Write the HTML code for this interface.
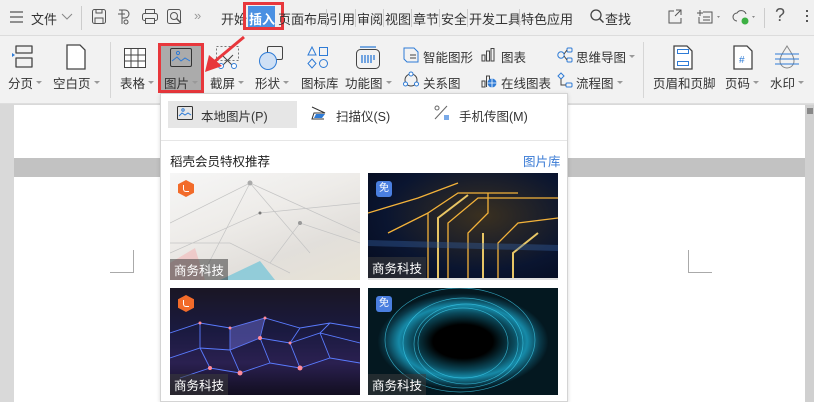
<!DOCTYPE html>
<html><head><meta charset="utf-8"><style>
*{margin:0;padding:0;box-sizing:border-box}
body{width:814px;height:402px;overflow:hidden;background:#d9d9d9;font-family:"Liberation Sans","Noto Sans CJK SC",sans-serif;font-size:12px;color:#333;position:relative}
.a{position:absolute;white-space:nowrap}
#top{position:absolute;left:0;top:0;width:814px;height:36px;background:#f0f0f0;border-bottom:1px solid #dcdcdc}
#rib{position:absolute;left:0;top:36px;width:814px;height:68px;background:#f2f2f2;border-bottom:1px solid #dedede}
.t{font-size:13px;top:9px;color:#333}
.l{font-size:12.5px;top:73px;color:#333}
.s{font-size:12.5px;color:#333}
.dd:after{content:"";display:inline-block;border:3px solid transparent;border-top:3px solid #999;margin-left:3px;vertical-align:1px}
svg{position:absolute;overflow:visible}
.img{position:absolute;overflow:hidden}
.cap{position:absolute;left:0;bottom:0;background:rgba(60,60,60,.55);color:#fff;font-size:12.5px;padding:1px 4px 1px 4px}
.badge{position:absolute;left:8px;top:8px;width:16px;height:16px;border-radius:3px;background:#4a7fe0;color:#fff;font-size:10px;text-align:center;line-height:16px}
.hex{position:absolute;left:8px;top:7px;width:16px;height:17px;background:#f26b2a;clip-path:polygon(50% 0,100% 25%,100% 75%,50% 100%,0 75%,0 25%)}
.hex:after{content:"";position:absolute;left:5px;top:5px;width:5px;height:6px;border-left:1.5px solid #fff;border-bottom:1.5px solid #fff;border-radius:0 0 0 3px}
</style></head><body>
<div id="top"></div>
<div id="rib"></div>
<!-- top row -->
<svg style="left:10px;top:11px" width="14" height="12"><path d="M0 1H13M0 6H13M0 11H13" stroke="#555" stroke-width="1.3"/></svg>
<div class="a t" style="left:31px">文件</div>
<svg style="left:62px;top:14px" width="10" height="6"><path d="M0 0L5 5L10 0" stroke="#888" fill="none"/></svg>
<div class="a" style="left:81px;top:6px;width:1px;height:24px;background:#ccc"></div>
<svg style="left:92px;top:9px" width="14" height="15"><rect x="0.5" y="0.5" width="13" height="14" rx="2" fill="none" stroke="#555"/><path d="M3 14V9H11V14M4 1V4H10V1" stroke="#555" fill="none"/></svg>
<svg style="left:117px;top:9px" width="14" height="16"><path d="M2 1H8A4 4 0 0 1 8 9H5M5 1V15M1 5H8" stroke="#555" fill="none"/><circle cx="9" cy="13" r="2" fill="none" stroke="#555"/></svg>
<svg style="left:142px;top:9px" width="16" height="15"><rect x="0.5" y="4.5" width="15" height="7" rx="2" fill="none" stroke="#555"/><rect x="3.5" y="0.5" width="9" height="4" fill="none" stroke="#555"/><rect x="3.5" y="9.5" width="9" height="5" fill="#f0f0f0" stroke="#555"/></svg>
<svg style="left:167px;top:9px" width="16" height="16"><rect x="0.5" y="0.5" width="13" height="14" rx="2" fill="none" stroke="#555"/><circle cx="7" cy="7" r="3.5" fill="none" stroke="#555"/><path d="M9.5 9.5L14 14" stroke="#555" stroke-width="1.5"/></svg>
<div class="a" style="left:194px;top:8px;color:#999;font-size:13px">»</div>
<div class="a t" style="left:221px">开始</div>
<div class="a" style="left:248px;top:6px;width:27px;height:22px;background:#4a90e2"></div>
<div class="a t" style="left:249px;color:#fff;font-weight:bold">插入</div>
<div class="a" style="left:243px;top:2px;width:41px;height:28px;border:3px solid #e8373c"></div>
<div class="a t" style="left:278px">页面布局</div>
<div class="a" style="left:326px;top:9px;width:1px;height:18px;background:#ccc"></div>
<div class="a t" style="left:329px">引用</div>
<div class="a" style="left:355px;top:9px;width:1px;height:18px;background:#ccc"></div>
<div class="a t" style="left:357px">审阅</div>
<div class="a" style="left:383px;top:9px;width:1px;height:18px;background:#ccc"></div>
<div class="a t" style="left:385px">视图</div>
<div class="a" style="left:411px;top:9px;width:1px;height:18px;background:#ccc"></div>
<div class="a t" style="left:413px">章节</div>
<div class="a" style="left:439px;top:9px;width:1px;height:18px;background:#ccc"></div>
<div class="a t" style="left:441px">安全</div>
<div class="a" style="left:467px;top:9px;width:1px;height:18px;background:#ccc"></div>
<div class="a t" style="left:469px">开发工具</div>
<div class="a" style="left:519px;top:9px;width:1px;height:18px;background:#ccc"></div>
<div class="a t" style="left:521px">特色应用</div>
<svg style="left:590px;top:9px" width="14" height="15"><circle cx="6" cy="6" r="5" fill="none" stroke="#444" stroke-width="1.3"/><path d="M9.5 9.5L13.5 13.5" stroke="#444" stroke-width="1.5"/></svg>
<div class="a t" style="left:605px">查找</div>
<svg style="left:668px;top:9px" width="15" height="15"><path d="M6 2H1V14H13V9M8 1H13V6M13 1L7 7" stroke="#555" fill="none"/></svg>
<svg style="left:697px;top:9px" width="26" height="15"><path d="M3 1V7M0 4H6M6 3H15V14H2V8M6 8H13M6 11H13" stroke="#555" fill="none"/><path d="M20 7L23 7L21.5 9Z" fill="#888"/></svg>
<svg style="left:732px;top:9px" width="26" height="16"><path d="M5 12A4 4 0 0 1 5 4A5 5 0 0 1 14 5" stroke="#555" fill="none"/><circle cx="13" cy="12" r="3.5" fill="#3cb043"/><path d="M20 7L23 7L21.5 9Z" fill="#888"/></svg>
<div class="a" style="left:764px;top:8px;width:1px;height:20px;background:#ccc"></div>
<div class="a" style="left:775px;top:5px;font-size:18px;color:#555">?</div>
<div class="a" style="left:806px;top:10px;width:2px;height:2px;background:#555;box-shadow:0 5px #555,0 10px #555"></div>
<!-- ribbon -->
<svg style="left:12px;top:45px" width="24" height="24"><path d="M4 1H20V8H4ZM4 13H20V22H4Z" fill="none" stroke="#444" stroke-width="1.3" stroke-linejoin="round"/><path d="M0 8L3 10L0 12Z" fill="#2e7bd6"/></svg>
<div class="a l dd" style="left:8px">分页</div>
<svg style="left:66px;top:44px" width="20" height="26"><path d="M1 1H14L19 6V25H1Z" fill="#fff" stroke="#444" stroke-width="1.3"/></svg>
<div class="a l dd" style="left:53px">空白页</div>
<div class="a" style="left:110px;top:42px;width:1px;height:56px;background:#d6d6d6"></div>
<svg style="left:124px;top:48px" width="22" height="20"><rect x="0.5" y="0.5" width="21" height="19" fill="#fff" stroke="#444"/><path d="M0 7H22M0 13H22M7 0V20M14 0V20" stroke="#444"/></svg>
<div class="a l dd" style="left:120px">表格</div>
<div class="a" style="left:158px;top:43px;width:46px;height:50px;background:#ababab;border:3px solid #e8373c"></div>
<svg style="left:170px;top:48px" width="22" height="19"><rect x="0.5" y="0.5" width="21" height="18" rx="1.5" fill="none" stroke="#333"/><circle cx="8" cy="5" r="1.6" fill="none" stroke="#2e7bd6"/><path d="M2 13L7 9L11 13L15 10L20 13" stroke="#2e7bd6" fill="none"/></svg>
<div class="a l dd" style="left:164px">图片</div>
<svg style="left:216px;top:46px" width="24" height="24"><rect x="0.5" y="0.5" width="22" height="14" fill="none" stroke="#777" stroke-dasharray="2 2"/><path d="M6 9L17 20M17 9L6 20" stroke="#444"/><circle cx="5" cy="20" r="2.5" fill="#fff" stroke="#2e7bd6"/><circle cx="18" cy="20" r="2.5" fill="#fff" stroke="#2e7bd6"/></svg>
<div class="a l dd" style="left:210px">截屏</div>
<svg style="left:258px;top:45px" width="26" height="26"><rect x="9.5" y="1.5" width="15" height="13" rx="1.5" fill="none" stroke="#444"/><circle cx="10" cy="16" r="8.5" fill="#cfe0f5" stroke="#2e7bd6"/></svg>
<div class="a l dd" style="left:255px">形状</div>
<svg style="left:307px;top:46px" width="22" height="24"><path d="M5 1L9 9H1Z" fill="none" stroke="#2e7bd6"/><rect x="12.5" y="1.5" width="8" height="8" fill="none" stroke="#2e7bd6"/><path d="M5 13L9 17.5L5 22L1 17.5Z" fill="none" stroke="#2e7bd6"/><circle cx="16.5" cy="17.5" r="4" fill="none" stroke="#2e7bd6"/></svg>
<div class="a l" style="left:301px">图标库</div>
<svg style="left:355px;top:46px" width="26" height="24"><rect x="1.5" y="3.5" width="23" height="19" rx="4" fill="none" stroke="#444"/><path d="M5 1H21M7 9V17M10 9V17M13 9V17M16 9V17M19 9V14" stroke="#2e7bd6" stroke-width="1.3"/></svg>
<div class="a l dd" style="left:345px">功能图</div>
<svg style="left:403px;top:47px" width="16" height="16"><path d="M1 1H11L15 5V15H4L1 12Z" fill="none" stroke="#2e7bd6"/><path d="M7 8H13M7 11H13" stroke="#444"/></svg>
<div class="a s" style="left:423px;top:47px">智能图形</div>
<svg style="left:403px;top:72px" width="16" height="16"><circle cx="8" cy="8" r="6" fill="none" stroke="#444"/><circle cx="8" cy="2" r="2" fill="#fff" stroke="#2e7bd6"/><circle cx="2.5" cy="12" r="2" fill="#fff" stroke="#2e7bd6"/><circle cx="13.5" cy="12" r="2" fill="#fff" stroke="#2e7bd6"/></svg>
<div class="a s" style="left:423px;top:73px">关系图</div>
<svg style="left:481px;top:48px" width="14" height="14"><path d="M1 13V7H4V13ZM5.5 13V3H8.5V13ZM10 13V0.5H13V13Z" fill="none" stroke="#444"/></svg>
<div class="a s" style="left:501px;top:47px">图表</div>
<svg style="left:481px;top:72px" width="16" height="16"><path d="M1 15V9H4V15ZM5.5 15V4H8.5V9" fill="none" stroke="#444"/><circle cx="11" cy="11" r="4.5" fill="#2e7bd6"/><path d="M6.5 11H15.5M11 6.5V15.5" stroke="#fff" stroke-width=".8"/></svg>
<div class="a s" style="left:501px;top:73px">在线图表</div>
<svg style="left:557px;top:47px" width="16" height="16"><circle cx="4" cy="8" r="3.2" fill="none" stroke="#2e7bd6"/><rect x="10" y="1" width="5" height="4" rx="1" fill="none" stroke="#2e7bd6"/><rect x="10" y="11" width="5" height="4" rx="1" fill="none" stroke="#2e7bd6"/><path d="M7 7L10 3M7 9L10 13" stroke="#444"/></svg>
<div class="a s dd" style="left:576px;top:47px">思维导图</div>
<svg style="left:557px;top:72px" width="16" height="16"><path d="M4 1L7 4L4 7L1 4Z" fill="none" stroke="#2e7bd6"/><rect x="9" y="11" width="6" height="4" rx="1" fill="none" stroke="#2e7bd6"/><path d="M4 7V13H9" stroke="#444" fill="none"/></svg>
<div class="a s dd" style="left:576px;top:73px">流程图</div>
<div class="a" style="left:643px;top:42px;width:1px;height:56px;background:#d6d6d6"></div>
<svg style="left:673px;top:45px" width="20" height="25"><path d="M1 1H14L19 6V24H1Z" fill="#fff" stroke="#444" stroke-width="1.3"/><rect x="4.5" y="4.5" width="11" height="4" fill="none" stroke="#2e7bd6"/><rect x="4.5" y="16.5" width="11" height="4" fill="none" stroke="#2e7bd6"/></svg>
<div class="a l" style="left:653px">页眉和页脚</div>
<svg style="left:733px;top:45px" width="20" height="25"><path d="M1 1H14L19 6V24H1Z" fill="#fff" stroke="#444" stroke-width="1.3"/><text x="6" y="18" font-size="10" fill="#2e7bd6" font-family="Liberation Sans">#</text></svg>
<div class="a l dd" style="left:725px">页码</div>
<svg style="left:775px;top:45px" width="24" height="26"><path d="M12 1C9 6 5 11 5 16A7 7 0 0 0 19 16C19 11 15 6 12 1Z" fill="none" stroke="#888"/><path d="M0 9H24M0 14H24M0 19H24" stroke="#2e7bd6"/></svg>
<div class="a l dd" style="left:770px">水印</div>
<!-- arrow -->
<svg style="left:0;top:0" width="814" height="402"><path d="M244 37L214 62" stroke="#e8373c" stroke-width="3"/><path d="M205 72L209 55L222 66Z" fill="#e8373c"/></svg>
<!-- document -->
<div class="a" style="left:14px;top:105px;width:791px;height:53px;background:#fff"></div>
<div class="a" style="left:14px;top:158px;width:791px;height:19px;background:#c2c2c2"></div>
<div class="a" style="left:14px;top:177px;width:791px;height:225px;background:#fff"></div>
<div class="a" style="left:110px;top:250px;width:24px;height:23px;border-right:1px solid #aaa;border-bottom:1px solid #aaa"></div>
<div class="a" style="left:688px;top:250px;width:24px;height:23px;border-left:1px solid #aaa;border-bottom:1px solid #aaa"></div>
<div class="a" style="left:805px;top:105px;width:9px;height:297px;background:#d0d0d0"></div>
<div class="a" style="left:807px;top:108px;width:6px;height:6px;background:#888"></div>
<!-- popup -->
<div class="a" style="left:160px;top:93px;width:408px;height:309px;background:#fff;border:1px solid #d4d4d4;box-shadow:0 1px 4px rgba(0,0,0,.15)"></div>
<div class="a" style="left:168px;top:101px;width:129px;height:27px;background:#e6e6e6"></div>
<svg style="left:177px;top:106px" width="16" height="14"><rect x="0.5" y="0.5" width="15" height="13" rx="1" fill="none" stroke="#333"/><circle cx="6" cy="4" r="1.2" fill="none" stroke="#2e7bd6"/><path d="M2 10L5 7L8 9L11 7L14 9" stroke="#2e7bd6" fill="none"/></svg>
<div class="a" style="left:201px;top:106px;font-size:12.5px">本地图片(P)</div>
<svg style="left:311px;top:106px" width="16" height="14"><path d="M1 1L14 7H3L1 13H13" stroke="#333" fill="none"/><path d="M5 8H14L11 12H3Z" fill="#2e7bd6"/></svg>
<div class="a" style="left:336px;top:106px;font-size:12.5px">扫描仪(S)</div>
<svg style="left:434px;top:105px" width="16" height="16"><path d="M1 14L13 1" stroke="#666"/><circle cx="3" cy="3" r="2" fill="none" stroke="#666"/><rect x="10" y="10" width="5" height="5" fill="#7aaae8"/></svg>
<div class="a" style="left:459px;top:106px;font-size:12.5px">手机传图(M)</div>
<div class="a" style="left:161px;top:140px;width:406px;height:1px;background:#e6e6e6"></div>
<div class="a" style="left:170px;top:151px;font-size:12.5px;color:#222">稻壳会员特权推荐</div>
<div class="a" style="left:523px;top:151px;font-size:12.5px;color:#3a7bd5">图片库</div>
<!-- images -->
<div class="img" style="left:170px;top:173px;width:190px;height:107px;background:linear-gradient(160deg,#f6f6f6 0%,#eeece9 40%,#e2dfdb 70%,#e8e3d6 100%)">
<svg width="190" height="107"><path d="M0 50L80 10L190 60M0 80L90 40L190 30M30 107L80 10L140 80M100 90L130 50L190 70M0 70L60 70L120 100" stroke="#c4c4c4" stroke-width=".7" fill="none"/><path d="M50 107L90 88L105 107Z" fill="#6fc3d8" opacity=".7"/><path d="M0 90L25 75L35 107H0Z" fill="#f2b8b8" opacity=".6"/><circle cx="80" cy="10" r="2.5" fill="#aaa"/><circle cx="130" cy="50" r="2" fill="#999"/><circle cx="90" cy="40" r="1.5" fill="#777"/></svg>
<div class="hex"></div><div class="cap">商务科技</div></div>
<div class="img" style="left:368px;top:173px;width:190px;height:107px;background:radial-gradient(ellipse at 60% 40%,#3a3020 0%,#0a1530 60%,#050a1c 100%)">
<svg width="190" height="105"><path d="M60 105V40L90 20H150M80 105V50L110 25H190M100 105V60L120 40V20M130 105V70L150 50L190 45M20 60L60 40M0 40L50 25L90 10" stroke="#f3b23a" stroke-width="1.3" fill="none"/><path d="M70 105V45L100 22M115 105V60M145 105V80L170 60" stroke="#ffd86b" stroke-width="2" fill="none" opacity=".9"/><path d="M0 70L190 75" stroke="#3a6ab0" stroke-width="6" opacity=".35"/></svg>
<div class="a" style="left:0;bottom:0;width:190px;height:2px;background:#e0e0e0"></div>
<div class="badge">免</div><div class="cap" style="bottom:2px">商务科技</div></div>
<div class="img" style="left:170px;top:288px;width:190px;height:107px;background:linear-gradient(180deg,#1a1624 0%,#1a1a40 40%,#2a2050 70%,#120e20 100%)">
<svg width="190" height="107"><path d="M0 45L30 35L60 40L95 30L130 40L160 35L190 40M0 70L30 60L60 62L90 50L120 55L150 45L190 55M10 90L40 80L70 85L100 75L130 80L160 70L190 75M30 35L30 60L40 80M60 40L60 62L70 85M95 30L90 50L100 75M130 40L120 55L130 80M160 35L150 45L160 70" stroke="#5a7bff" stroke-width=".9" fill="none"/><path d="M60 62L90 50L95 30L60 40Z" fill="#6a6ad0" opacity=".5"/><g fill="#ff8a9a"><circle cx="30" cy="35" r="1.5"/><circle cx="60" cy="40" r="1.5"/><circle cx="95" cy="30" r="1.5"/><circle cx="90" cy="50" r="2"/><circle cx="120" cy="55" r="1.5"/><circle cx="70" cy="85" r="2.5"/><circle cx="130" cy="80" r="2.5"/><circle cx="40" cy="80" r="2"/></g></svg>
<div class="hex"></div><div class="cap">商务科技</div></div>
<div class="img" style="left:368px;top:288px;width:190px;height:107px;background:radial-gradient(ellipse 45% 45% at 50% 50%,#000 0%,#000 35%,#0b4a5c 60%,#168aa8 75%,#0a3a4a 90%,#041820 100%)">
<svg width="190" height="107"><g fill="none" stroke="#3fd0f0" stroke-width=".7" opacity=".7"><ellipse cx="95" cy="55" rx="45" ry="35"/><ellipse cx="95" cy="55" rx="60" ry="45"/><ellipse cx="92" cy="52" rx="75" ry="52"/><ellipse cx="98" cy="56" rx="52" ry="40"/></g></svg>
<div class="badge">免</div><div class="cap">商务科技</div></div>
</body></html>
